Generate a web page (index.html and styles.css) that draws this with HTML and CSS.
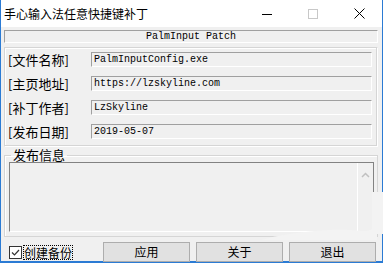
FILE: index.html
```html
<!DOCTYPE html>
<html lang="zh-CN">
<head>
<meta charset="utf-8">
<title>手心输入法任意快捷键补丁</title>
<link rel="stylesheet" href="styles.css">
</head>
<body>
<div class="window">
  <div class="titlebar">
    <span class="title">手心输入法任意快捷键补丁</span>
    <div class="controls">
      <span class="ctl"><svg width="10" height="10" viewBox="0 0 10 10"><path d="M0 5.5H10" stroke="#000" stroke-width="1"/></svg></span>
      <span class="ctl"><svg width="10" height="10" viewBox="0 0 10 10"><rect x="0.5" y="0.5" width="9" height="9" fill="none" stroke="#c8c8c8" stroke-width="1"/></svg></span>
      <span class="ctl"><svg width="11" height="11" viewBox="0 0 11 11"><path d="M0.5 0.5L10.5 10.5M10.5 0.5L0.5 10.5" stroke="#000" stroke-width="1"/></svg></span>
    </div>
  </div>
  <div class="content">
    <div class="banner">PalmInput Patch</div>
    <div class="infogroup">
      <div class="row"><span class="label">[文件名称]</span><span class="field">PalmInputConfig.exe</span></div>
      <div class="row"><span class="label">[主页地址]</span><span class="field">https://lzskyline.com</span></div>
      <div class="row"><span class="label">[补丁作者]</span><span class="field">LzSkyline</span></div>
      <div class="row"><span class="label">[发布日期]</span><span class="field">2019-05-07</span></div>
    </div>
    <fieldset class="notes">
      <legend>发布信息</legend>
      <div class="textarea">
        <div class="scrollbar"><svg width="9" height="6" viewBox="0 0 9 6"><path d="M1 5L4.5 1.5L8 5" fill="none" stroke="#c0c0c0" stroke-width="1.5"/></svg></div>
      </div>
    </fieldset>
    <div class="bottom">
      <label class="check">
        <span class="box"><svg width="11" height="11" viewBox="0 0 11 11"><path d="M2 5.5L4.5 8L9 3" fill="none" stroke="#333" stroke-width="1.2"/></svg></span>
        <span class="checktext">创建备份</span>
      </label>
      <div class="buttons">
        <button class="btn">应用</button>
        <button class="btn">关于</button>
        <button class="btn">退出</button>
      </div>
    </div>
  </div>
  <svg class="blob" width="383" height="263" viewBox="0 0 383 263"><path d="M372 192H383V234H377V240H262C268 238 272 237 278 236C300 232 330 229 350 230C362 231 368 232 372 229Z" fill="#f3f3f3"/></svg>
</div>
</body>
</html>
```
FILE: styles.css
```css
html, body {
  margin: 0;
  padding: 0;
  background: #ffffff;
}
body {
  width: 383px;
  height: 263px;
  overflow: hidden;
  font-family: "Noto Sans CJK SC", "Noto Sans", sans-serif;
}
.window {
  position: relative;
  width: 383px;
  height: 263px;
  box-sizing: border-box;
  border-left: 1px solid #2b7bd4;
  border-right: 1px solid #2b7bd4;
  border-bottom: 2px solid #2b7bd4;
  background: #f0f0f0;
  display: flex;
  flex-direction: column;
}
.titlebar {
  height: 27px;
  background: #ffffff;
  display: flex;
  align-items: center;
  justify-content: space-between;
}
.title {
  padding-left: 3px;
  font-size: 12px;
  line-height: 16px;
  color: #000;
}
.controls {
  display: flex;
  height: 27px;
}
.ctl {
  width: 46px;
  height: 27px;
  display: flex;
  align-items: center;
  justify-content: center;
}
.content {
  flex: 1;
  padding: 3px 4px 0 3px;
  display: flex;
  flex-direction: column;
}
.banner {
  height: 11px;
  border-top: 1px solid #a0a0a0;
  border-left: 1px solid #a0a0a0;
  border-right: 1px solid #ffffff;
  border-bottom: 1px solid #ffffff;
  font-family: "Liberation Mono", monospace;
  font-size: 10px;
  line-height: 11px;
  text-align: center;
  color: #000;
}
.infogroup {
  margin-top: 4px;
  height: 94px;
  border-top: 1px solid #d5d5d5;
  border-left: 1px solid #d5d5d5;
  border-right: 1px solid #ffffff;
  border-bottom: 1px solid #ffffff;
  box-shadow: inset -1px -1px 0 #d5d5d5, inset 1px 1px 0 #ffffff;
  padding: 4px 5px 0 3px;
  display: flex;
  flex-direction: column;
  gap: 9px;
}
.row {
  display: flex;
  align-items: center;
  height: 15px;
}
.label {
  width: 83px;
  font-size: 13px;
  line-height: 15px;
  color: #000;
}
.field {
  flex: 1;
  height: 13px;
  border-top: 1px solid #a0a0a0;
  border-left: 1px solid #a0a0a0;
  border-right: 1px solid #ffffff;
  border-bottom: 1px solid #ffffff;
  padding-left: 2px;
  font-family: "Liberation Mono", monospace;
  font-size: 10px;
  line-height: 14px;
  color: #000;
}
.notes {
  margin: 1px 0 0 0;
  padding: 0 3px 4px 4px;
  border: 1px solid #d5d5d5;
  box-shadow: inset 1px 1px 0 #ffffff;
  min-width: 0;
}
.notes legend {
  margin-left: 2px;
  padding: 0 2px;
  font-size: 13px;
  line-height: 14px;
  color: #000;
}
.textarea {
  height: 68px;
  border-top: 1px solid #828282;
  border-left: 1px solid #828282;
  border-right: 1px solid #828282;
  border-bottom: 1px solid #ffffff;
  display: flex;
  justify-content: flex-end;
}
.scrollbar {
  width: 16px;
  border-left: 1px solid #ffffff;
  display: flex;
  justify-content: center;
  padding-top: 9px;
  box-sizing: border-box;
}
.bottom {
  margin-top: 5px;
  display: flex;
  align-items: center;
  height: 20px;
}
.check {
  display: flex;
  align-items: center;
  padding-left: 5px;
  width: 94px;
}
.box {
  width: 11px;
  height: 11px;
  border: 1px solid #333;
  background: #ffffff;
  display: flex;
}
.checktext {
  margin-left: 2px;
  font-size: 12px;
  line-height: 13px;
  outline: 1px dotted #000;
  color: #000;
}
.buttons {
  display: flex;
  gap: 6px;
}
.btn {
  width: 87px;
  height: 20px;
  margin: 0;
  padding: 0;
  background: #e1e1e1;
  border: 1px solid #adadad;
  font-family: "Noto Sans CJK SC", sans-serif;
  font-size: 12px;
  line-height: 16px;
  color: #000;
}
.blob {
  position: absolute;
  left: -1px;
  top: 0;
  pointer-events: none;
}
```
